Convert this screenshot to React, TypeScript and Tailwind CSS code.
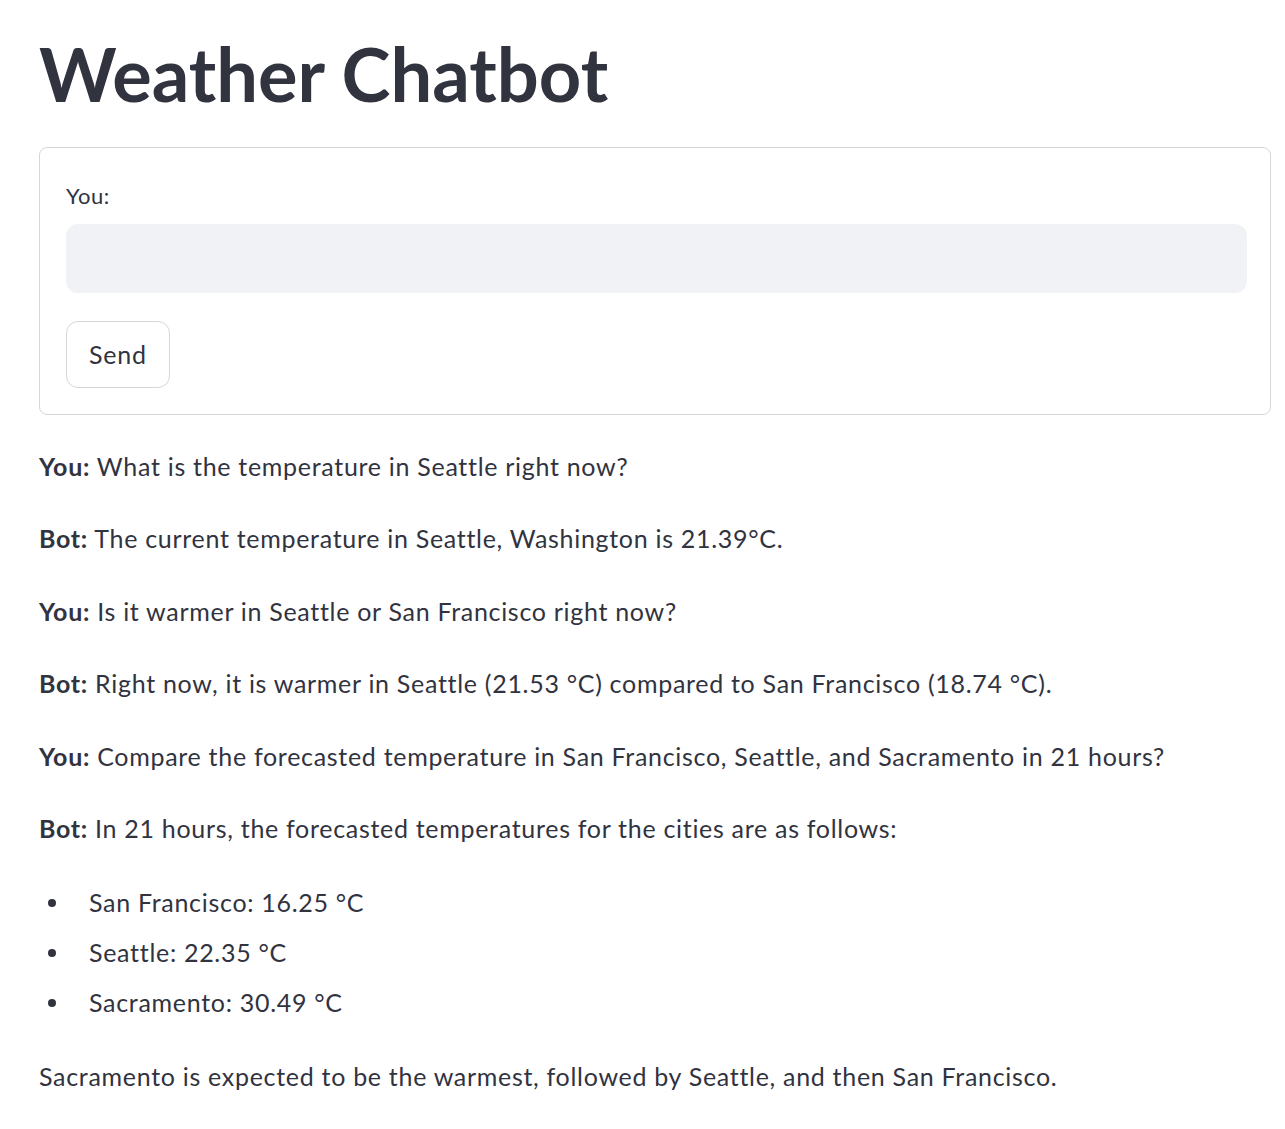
const font = { fontFamily: "Lato, 'Noto Sans', sans-serif" };

function Line({ who, children }: { who?: string; children: React.ReactNode }) {
  return (
    <div className="flex h-[72.5px] items-center text-[25px] leading-none tracking-[0.7px]">
      <p>
        {who && <b className="font-bold">{who}:</b>} {children}
      </p>
    </div>
  );
}

function Bullet({ children }: { children: React.ReactNode }) {
  return (
    <li className="flex h-[50px] items-center text-[25px] leading-none tracking-[0.7px]">
      <span className="ml-[9px] mr-[33px] h-[8px] w-[8px] rounded-full bg-[#31333F]" />
      {children}
    </li>
  );
}

export default function App() {
  return (
    <div className="min-h-screen bg-white pl-[39px] pr-[14px] text-[#31333F]" style={font}>
      <h1 className="flex h-[147px] items-center text-[74px] font-bold leading-none">Weather Chatbot</h1>

      <form
        className="flex h-[268px] flex-col rounded-[8px] border border-[#d6d6d9] pl-[26px] pr-[23px] pt-[37px]"
        onSubmit={(e) => e.preventDefault()}
      >
        <label className="text-[22px] leading-none tracking-[0.6px]">You:</label>
        <input className="mt-[17px] h-[69px] w-full rounded-[12px] bg-[#f0f2f6] px-4 text-[24px] outline-none" />
        <button
          type="submit"
          className="mt-[28px] h-[67px] w-[104px] rounded-[12px] border border-[#d6d6d9] bg-white text-[25px] tracking-[0.8px]"
        >
          Send
        </button>
      </form>

      <div className="pt-[15px]">
        <Line who="You">What is the temperature in Seattle right now?</Line>
        <Line who="Bot">The current temperature in Seattle, Washington is 21.39°C.</Line>
        <Line who="You">Is it warmer in Seattle or San Francisco right now?</Line>
        <Line who="Bot">Right now, it is warmer in Seattle (21.53 °C) compared to San Francisco (18.74 °C).</Line>
        <Line who="You">Compare the forecasted temperature in San Francisco, Seattle, and Sacramento in 21 hours?</Line>
        <Line who="Bot">In 21 hours, the forecasted temperatures for the cities are as follows:</Line>
        <ul className="mt-[12.5px]">
          <Bullet>San Francisco: 16.25 °C</Bullet>
          <Bullet>Seattle: 22.35 °C</Bullet>
          <Bullet>Sacramento: 30.49 °C</Bullet>
        </ul>
        <div className="mt-[24px] flex h-[50px] items-center text-[25px] leading-none tracking-[0.7px]">
          <p>Sacramento is expected to be the warmest, followed by Seattle, and then San Francisco.</p>
        </div>
      </div>
    </div>
  );
}
